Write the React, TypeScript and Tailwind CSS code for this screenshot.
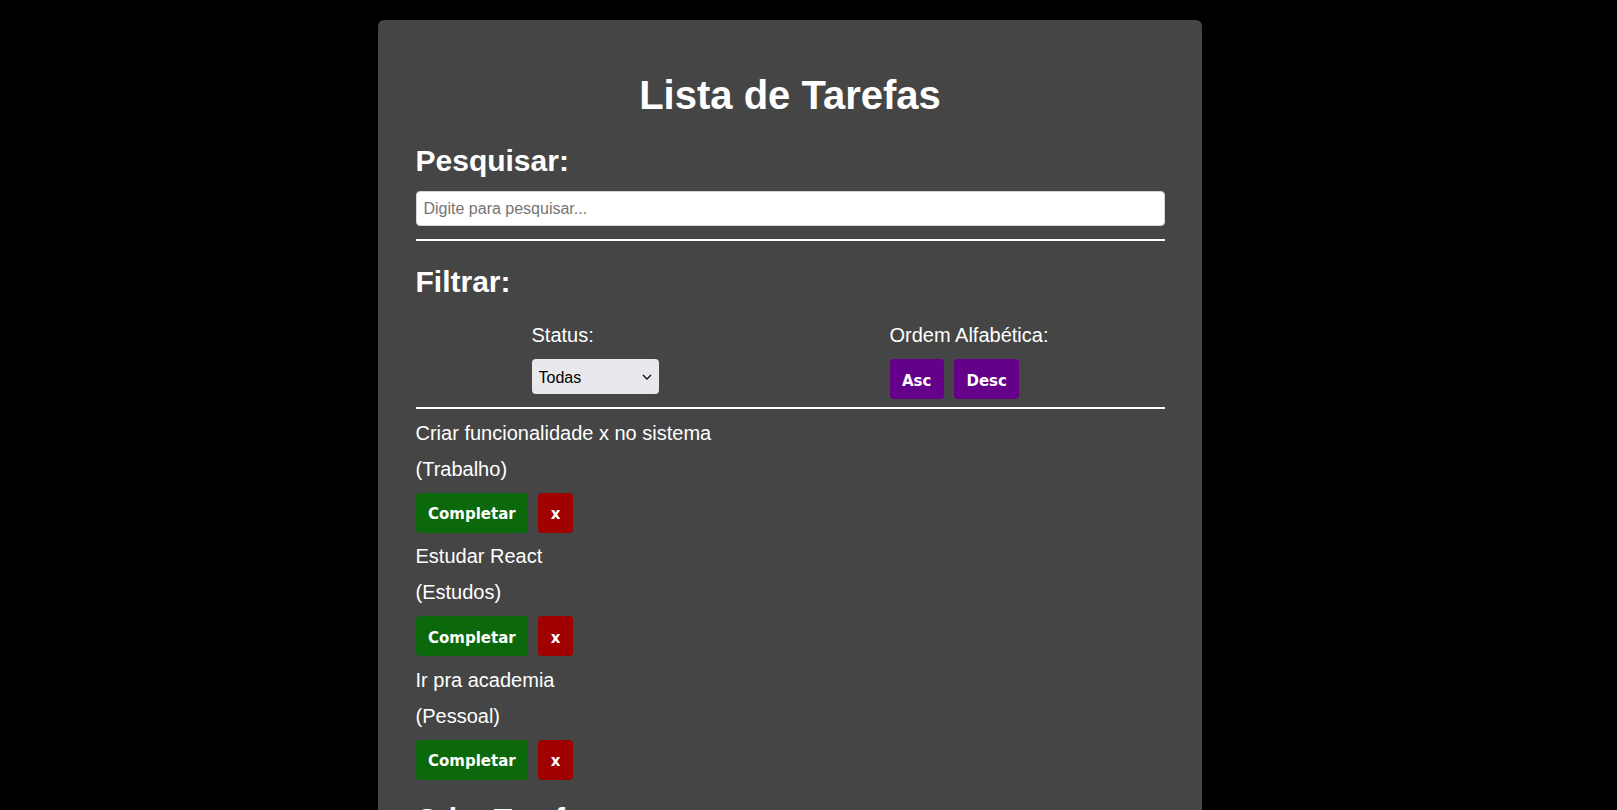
const tarefas = [
  { id: 1, titulo: "Criar funcionalidade x no sistema", categoria: "Trabalho" },
  { id: 2, titulo: "Estudar React", categoria: "Estudos" },
  { id: 3, titulo: "Ir pra academia", categoria: "Pessoal" },
];

const btn =
  "h-[40px] rounded-[4px] px-[12.5px] pt-[4px] font-['DejaVu_Sans',sans-serif] text-[15px] font-bold text-white";

export default function App() {
  return (
    <div className="flex min-h-screen justify-center bg-black pr-[37px] pt-[20px] font-['Liberation_Sans',Arial,sans-serif] text-white">
      <div className="w-[824px] rounded-[6px] bg-[#454545] px-[37.5px] pb-[40px] pt-[52px]">
        <h1 className="text-center text-[40px] leading-[46px] font-bold">
          Lista de Tarefas
        </h1>

        <h2 className="mt-[26px] text-[30px] leading-[34.5px] font-bold">
          Pesquisar:
        </h2>
        <input
          type="text"
          placeholder="Digite para pesquisar..."
          className="mt-[12px] block h-[35px] w-full rounded-[4px] border border-[#d4d4d4] bg-white px-[7px] pt-[2px] text-[16px] text-black placeholder:text-[#757575]"
        />
        <div className="mt-[13.5px] h-[2px] bg-white" />

        <h2 className="mt-[23.5px] text-[30px] leading-[34.5px] font-bold">
          Filtrar:
        </h2>
        <div className="mt-[25px] grid grid-cols-[358px_auto] pl-[116px]">
          <div>
            <div className="text-[20px] leading-[23px]">Status:</div>
            <div className="relative mt-[12px] w-[127px]">
              <select className="block h-[35px] w-full appearance-none rounded-[4px] bg-[#e9e9ed] pl-[7px] pt-[2px] text-[16px] text-black outline-none">
                <option>Todas</option>
                <option>Completas</option>
                <option>Incompletas</option>
              </select>
              <svg
                className="pointer-events-none absolute right-[7px] top-[15px]"
                width="10"
                height="6"
                viewBox="0 0 10 6"
                fill="none"
                stroke="#111"
                strokeWidth="1.4"
              >
                <path d="M1 1l4 4 4-4" />
              </svg>
            </div>
          </div>
          <div>
            <div className="text-[20px] leading-[23px]">Ordem Alfabética:</div>
            <div className="mt-[12px] flex gap-[10px]">
              <button className={`${btn} bg-[#65008a]`}>Asc</button>
              <button className={`${btn} bg-[#65008a]`}>Desc</button>
            </div>
          </div>
        </div>
        <div className="mt-[8px] h-[2px] bg-white" />

        {tarefas.map((t) => (
          <div key={t.id} className="pt-[5.5px]">
            <div className="text-[20px] leading-[36px]">{t.titulo}</div>
            <div className="text-[20px] leading-[36px]">({t.categoria})</div>
            <div className="mt-[6px] flex gap-[10px]">
              <button className={`${btn} bg-[#0b690b]`}>Completar</button>
              <button className={`${btn} bg-[#a00000]`}>x</button>
            </div>
          </div>
        ))}

        <h2 className="mt-[22px] text-[30px] leading-[34.5px] font-bold">
          Criar Tarefa:
        </h2>
        <input
          type="text"
          placeholder="Digite o título da tarefa..."
          className="mt-[12px] block h-[35px] w-full rounded-[4px] border border-[#d4d4d4] bg-white px-[7px] text-[16px] text-black placeholder:text-[#757575]"
        />
        <div className="mt-[12px] flex gap-[10px]">
          <button className={`${btn} bg-[#65008a]`}>Criar</button>
        </div>
      </div>
    </div>
  );
}
